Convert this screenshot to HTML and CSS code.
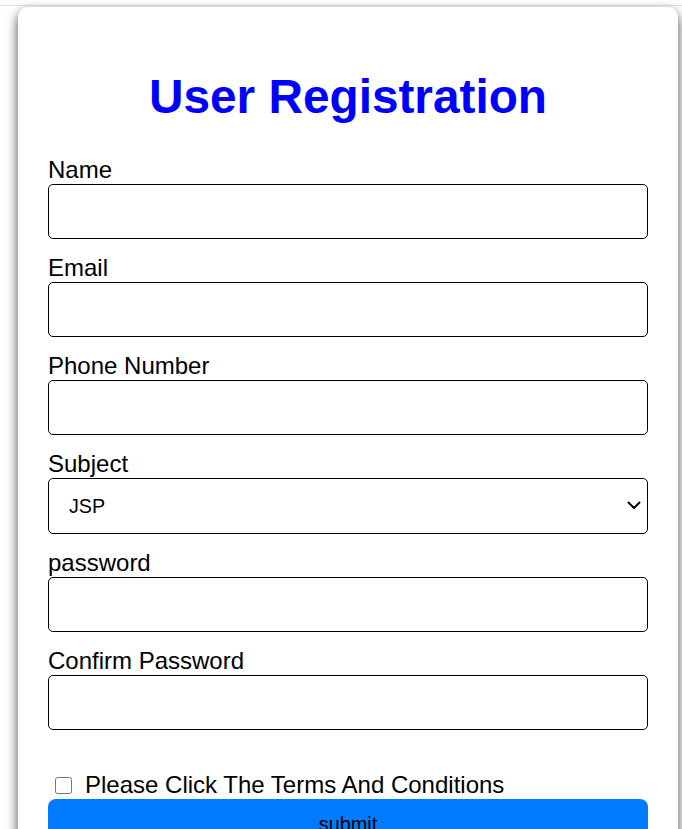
FILE: index.html
```html
<!DOCTYPE html>
<html lang="en">
<head>
<meta charset="utf-8">
<title>User Registration</title>
<link rel="stylesheet" href="styles.css">
</head>
<body>
<div class="topline"></div>
<div class="card">
  <h1 class="title">User Registration</h1>
  <form class="form">
    <div class="field">
      <label class="label" for="name">Name</label>
      <input class="control" id="name" type="text">
    </div>
    <div class="field">
      <label class="label" for="email">Email</label>
      <input class="control" id="email" type="email">
    </div>
    <div class="field">
      <label class="label" for="phone">Phone Number</label>
      <input class="control" id="phone" type="tel">
    </div>
    <div class="field">
      <label class="label" for="subject">Subject</label>
      <div class="select-wrap">
        <select class="control select" id="subject">
          <option>JSP</option>
          <option>Servlet</option>
          <option>Java</option>
        </select>
        <svg class="chevron" width="14" height="9" viewBox="0 0 14 9" aria-hidden="true">
          <path d="M1.5 1.5 L7 7 L12.5 1.5" fill="none" stroke="#000" stroke-width="2" stroke-linecap="round" stroke-linejoin="round"/>
        </svg>
      </div>
    </div>
    <div class="field">
      <label class="label" for="pw">password</label>
      <input class="control" id="pw" type="password">
    </div>
    <div class="field">
      <label class="label" for="cpw">Confirm Password</label>
      <input class="control" id="cpw" type="password">
    </div>
    <div class="terms">
      <input class="check" id="terms" type="checkbox">
      <label class="terms-label" for="terms">Please Click The Terms And Conditions</label>
    </div>
    <button class="submit" type="submit">submit</button>
  </form>
</div>
</body>
</html>
```

FILE: styles.css
```css
html, body {
  margin: 0;
  padding: 0;
  background: #ffffff;
  font-family: "Liberation Sans", Arial, sans-serif;
  color: #000;
}

body {
  overflow: hidden;
}

.topline {
  height: 1px;
  margin-top: 5px;
  background: #e2e2e2;
}

.card {
  box-sizing: border-box;
  width: 660px;
  margin: 1px 0 0 18px;
  padding: 30px 30px 40px;
  background: #fff;
  border-radius: 10px;
  box-shadow: 0 5px 12px rgba(0, 0, 0, 0.75);
}

.title {
  margin: 32px 0 32px;
  font-size: 47.75px;
  font-weight: bold;
  line-height: 55px;
  color: #0000ff;
  text-align: center;
}

.form {
  display: flex;
  flex-direction: column;
}

.field {
  display: flex;
  flex-direction: column;
  margin-bottom: 15px;
}

.label {
  font-size: 24px;
  line-height: 28px;
}

.control {
  box-sizing: border-box;
  width: 100%;
  height: 55px;
  margin: 0;
  padding: 0 12px;
  border: 1px solid #000;
  border-radius: 5px;
  background: #fff;
  font-family: "Liberation Sans", Arial, sans-serif;
  font-size: 19.7px;
}

.select-wrap {
  position: relative;
  display: flex;
}

.select {
  height: 56px;
  padding-left: 20px;
  color: #000;
  appearance: none;
  -webkit-appearance: none;
}

.chevron {
  position: absolute;
  right: 7px;
  top: 23px;
  pointer-events: none;
}

.terms {
  display: flex;
  align-items: center;
  margin-top: 26px;
  height: 28px;
}

.check {
  width: 17px;
  height: 17px;
  margin: 0 13px 0 7px;
}

.terms-label {
  font-size: 24px;
  line-height: 28px;
}

.submit {
  box-sizing: border-box;
  width: 100%;
  margin: 0;
  padding: 14px 0;
  border: none;
  border-radius: 8px;
  background: #007bff;
  color: #000;
  font-family: "Liberation Sans", Arial, sans-serif;
  font-size: 19.9px;
  line-height: 23px;
}
```
